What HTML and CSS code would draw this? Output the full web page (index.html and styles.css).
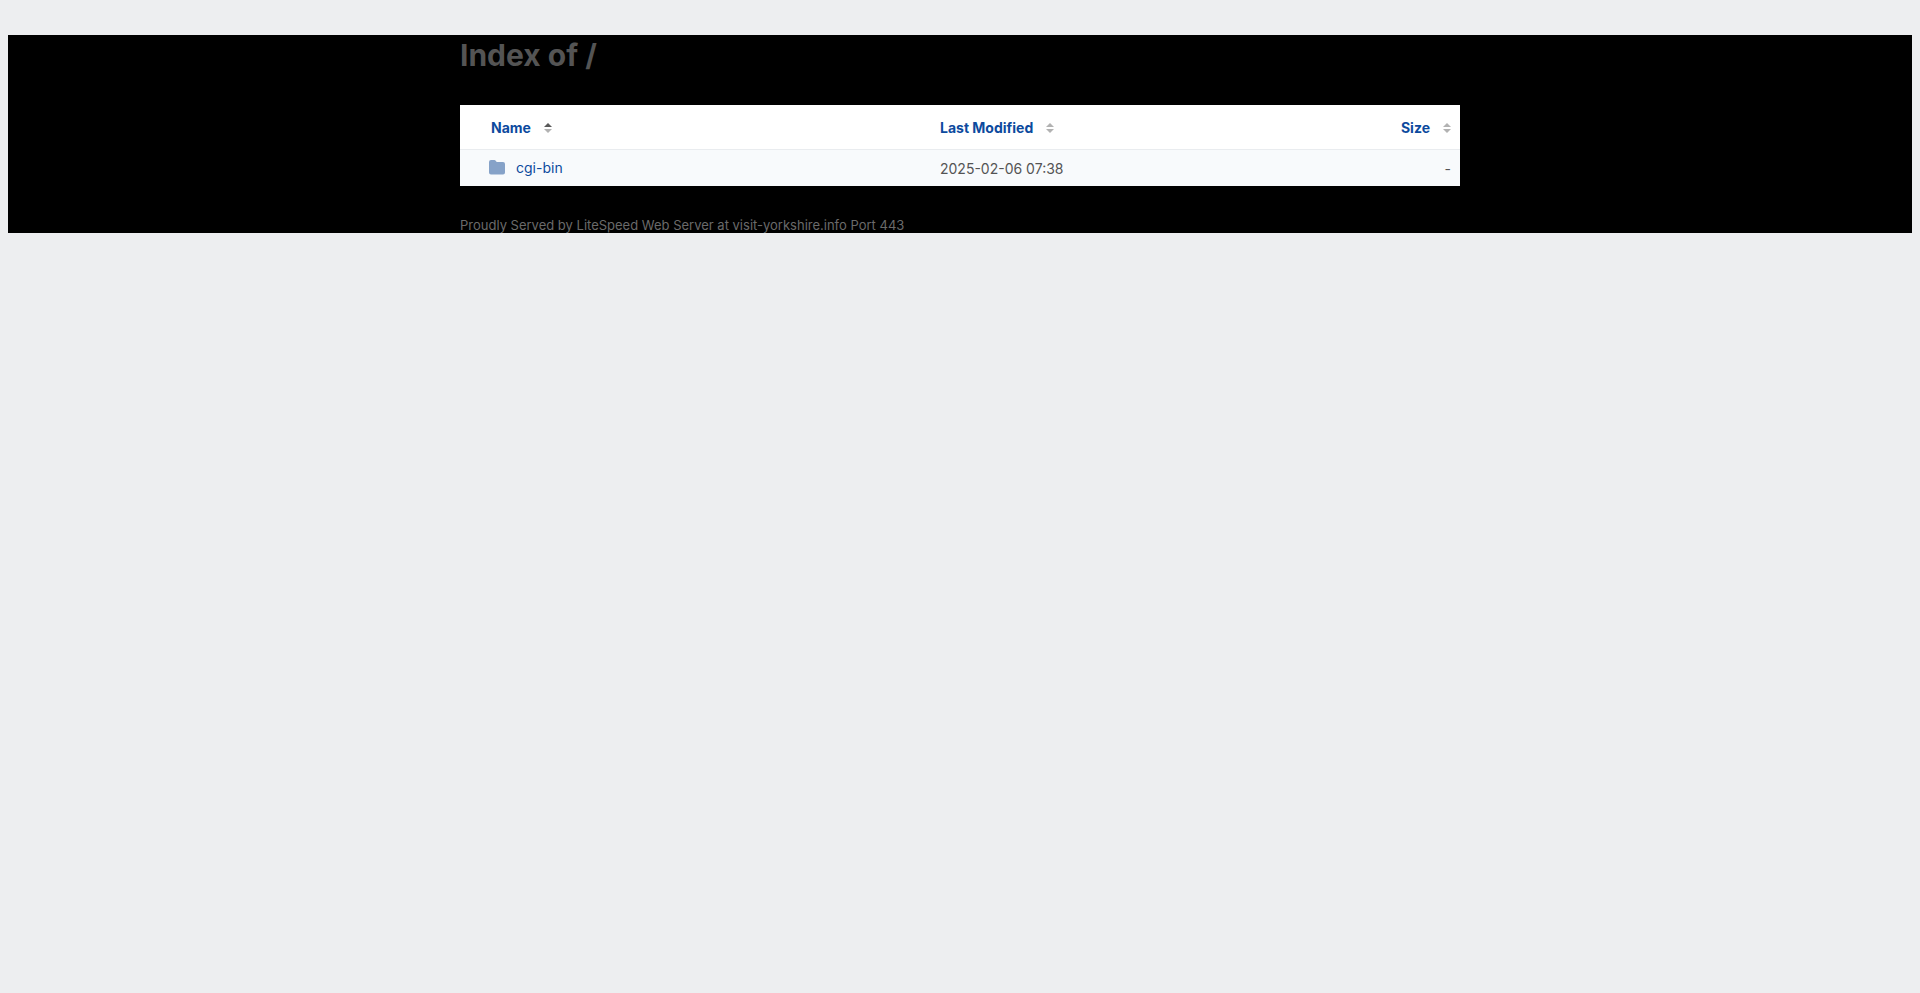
FILE: index.html
```html
<!DOCTYPE html>
<html lang="en">
<head>
<meta charset="utf-8">
<title>Index of /</title>
<link rel="stylesheet" href="styles.css">
</head>
<body>
<main class="page">
<div class="content">
<h1 class="title">Index of /</h1>
<table class="listing">
<thead>
<tr>
<th class="name" scope="col" aria-sort="ascending"><button class="sort sorted" type="button">Name<svg class="arrows" viewBox="0 0 8 10" aria-hidden="true"><path class="up" d="M0 4 4 0 8 4Z"/><path d="M0 6h8L4 10Z"/></svg></button></th>
<th class="date" scope="col"><button class="sort" type="button">Last Modified<svg class="arrows" viewBox="0 0 8 10" aria-hidden="true"><path d="M0 4 4 0 8 4Z"/><path d="M0 6h8L4 10Z"/></svg></button></th>
<th class="size" scope="col"><button class="sort" type="button">Size<svg class="arrows" viewBox="0 0 8 10" aria-hidden="true"><path d="M0 4 4 0 8 4Z"/><path d="M0 6h8L4 10Z"/></svg></button></th>
</tr>
</thead>
<tbody>
<tr>
<td class="name"><a class="entry" href="cgi-bin/"><svg class="folder" viewBox="0 0 16 15" aria-hidden="true"><path d="M2 0H5.4Q6.1 0 6.5.6L7.2 1.6Q7.5 2 8 2H14Q16 2 16 4V12.5Q16 14.5 14 14.5H2Q0 14.5 0 12.5V2Q0 0 2 0Z"/></svg>cgi-bin</a></td>
<td class="date">2025-02-06 07:38</td>
<td class="size">-</td>
</tr>
</tbody>
</table>
<footer class="footer">Proudly Served by LiteSpeed Web Server at visit-yorkshire.info Port 443</footer>
</div>
</main>
</body>
</html>
```
FILE: styles.css
```css
body {
  margin: 35px 8px 8px;
  background: #edeef0;
  color: #545454;
  font-family: Inter, "Liberation Sans", sans-serif;
  font-size: 14px;
  line-height: 20px;
}

.page {
  background: #000;
}

.content {
  max-width: 1000px;
  margin: 0 auto;
}

.title {
  margin: 0 0 30px;
  font-size: 30px;
  line-height: 40px;
  font-weight: 700;
}

.listing {
  width: 100%;
  table-layout: fixed;
  border-collapse: separate;
  border-spacing: 0;
  background: #fff;
}

.listing th,
.listing td {
  box-sizing: border-box;
  padding: 2px 9px 0 10px;
  text-align: left;
}

.listing th {
  height: 45px;
  border-bottom: 1px solid #e9ecef;
}

.listing td {
  height: 36px;
  background: #f8fafc;
}

.listing .name {
  width: 47%;
  padding-left: 31px;
}

.listing td.name {
  padding-left: 29px;
}

.listing .date {
  width: 35%;
}

.listing .size {
  text-align: right;
}

.sort {
  display: inline-flex;
  align-items: center;
  gap: 13px;
  padding: 0;
  border: 0;
  background: none;
  color: #0c4a9e;
  font: inherit;
  font-weight: 700;
  cursor: pointer;
}

.arrows {
  width: 8px;
  height: 10px;
  fill: #b2b2b2;
}

.sorted .up {
  fill: #595959;
}

.entry {
  display: inline-flex;
  align-items: center;
  gap: 11px;
  color: #0c4a9e;
  text-decoration: none;
}

.folder {
  width: 16px;
  height: 15px;
  fill: #86a2c8;
}

.footer {
  padding-top: 31px;
  color: #6a6a6a;
  font-size: 13px;
  line-height: 16px;
}
```
